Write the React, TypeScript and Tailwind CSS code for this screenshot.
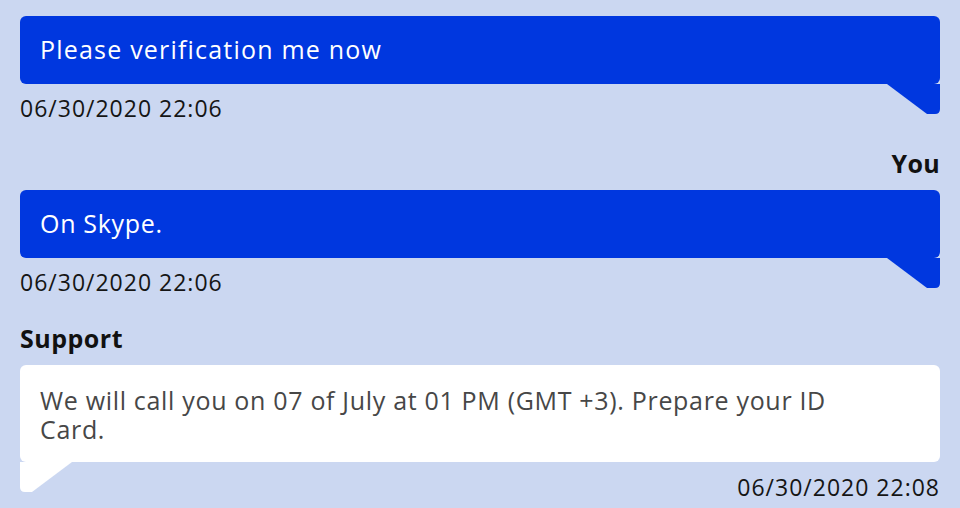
import React from "react";

const font = { fontFamily: "'Open Sans', Lato, sans-serif" };

function BlueTail() {
  return (
    <svg className="absolute right-0 top-full" width="53" height="30" viewBox="0 0 53 30">
      <path d="M0 0 H53 V25 Q53 30 48 30 H40 Z" fill="#0037df" />
    </svg>
  );
}

function WhiteTail() {
  return (
    <svg className="absolute left-0 top-full" width="52" height="30" viewBox="0 0 52 30">
      <path d="M0 0 H52 L12 30 H5 Q0 30 0 25 Z" fill="#ffffff" />
    </svg>
  );
}

function YouMsg({ text, time, top, wide }: { text: string; time: string; top?: boolean; wide?: boolean }) {
  return (
    <div className={top ? "mt-[-26px] flex flex-col" : "mt-[26px] flex flex-col"}>
      <div className="h-[30px] text-right text-[25px] font-bold leading-[30px] tracking-[0.3px] text-[#111]">You</div>
      <div
        className={
          wide
            ? "relative mt-[12px] flex h-[68px] items-center rounded-[6px] bg-[#0037df] px-5 text-[25px] tracking-[1.2px] text-white"
            : "relative mt-[12px] flex h-[68px] items-center rounded-[6px] bg-[#0037df] px-5 text-[25px] tracking-[0.7px] text-white"
        }
      >
        {text}
        <BlueTail />
      </div>
      <div className="mt-[10px] h-[28px] text-[23px] leading-[28px] tracking-[1px] text-[#151515]">{time}</div>
    </div>
  );
}

export default function App() {
  return (
    <div className="h-[508px] w-[960px] overflow-hidden bg-[#cbd7f1] px-5" style={font}>
      <YouMsg top wide text="Please verification me now" time="06/30/2020 22:06" />
      <YouMsg text="On Skype." time="06/30/2020 22:06" />
      <div className="mt-[27px] flex flex-col">
        <div className="h-[30px] text-[25px] font-bold leading-[30px] tracking-[0.5px] text-[#111]">Support</div>
        <div className="relative mt-[12px] rounded-[6px] bg-white px-5 pb-[18px] pt-[21px] text-[25px] leading-[29px] tracking-[0.68px] text-[#474747]">
          We will call you on 07 of July at 01 PM (GMT +3). Prepare your ID
          <br />
          Card.
          <WhiteTail />
        </div>
        <div className="mt-[11px] h-[28px] text-right text-[23px] leading-[28px] tracking-[1px] text-[#151515]">06/30/2020 22:08</div>
      </div>
    </div>
  );
}
